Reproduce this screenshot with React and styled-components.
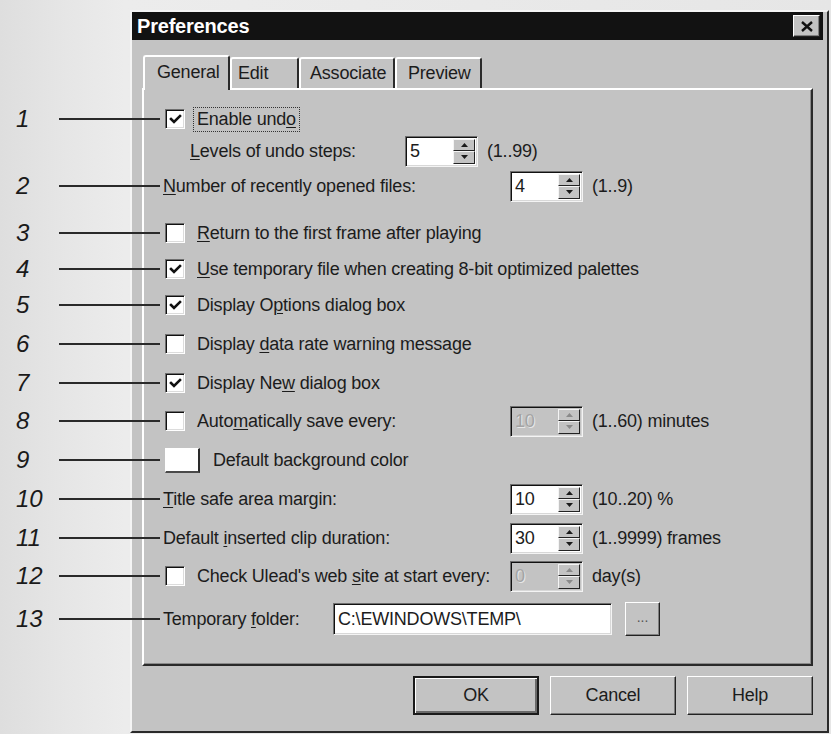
import React from 'react';
import styled, { createGlobalStyle } from 'styled-components';

const GlobalStyle = createGlobalStyle`
  html, body { margin: 0; padding: 0; }
  body {
    background: #e4e4e4;
    font-family: "Liberation Sans", Arial, sans-serif;
    color: #1c1c1c;
  }
`;

const Page = styled.div`
  width: 831px;
  height: 734px;
  box-sizing: border-box;
  padding: 10px 0 0 130px;
  background: linear-gradient(to right, #dedede 0%, #e6e6e6 8%, #ececec 15%, #e6e6e6 100%);
  overflow: hidden;
`;

const Window = styled.div`
  width: 699px;
  height: 723px;
  box-sizing: border-box;
  background: #c3c3c3;
  border-style: solid;
  border-width: 2px;
  border-color: #f4f4f4 #2a2a2a #2a2a2a #f4f4f4;
  display: flex;
  flex-direction: column;
`;

const TitleBar = styled.div`
  height: 28px;
  margin-right: 4px;
  background: #121212;
  display: flex;
  align-items: center;
  justify-content: space-between;
  padding: 0 3px 0 5px;
`;

const Title = styled.span`
  color: #fff;
  font-weight: bold;
  font-size: 20px;
  letter-spacing: -0.2px;
`;

const CloseButton = styled.button`
  width: 27px;
  height: 22px;
  padding: 0;
  background: #c3c3c3;
  border-style: solid;
  border-width: 1px;
  border-color: #fff #222 #222 #fff;
  box-shadow: inset -1px -1px #808080;
  display: flex;
  align-items: center;
  justify-content: center;
`;

const Body = styled.div`
  flex: 1;
  display: flex;
  flex-direction: column;
  padding: 15px 14px 0 10px;
`;

const TabRow = styled.div`
  display: flex;
  align-items: flex-end;
  height: 35px;
  margin: 0 0 -2px 1px;
  position: relative;
  z-index: 1;
`;

const Tab = styled.div`
  width: ${p => p.$w}px;
  height: ${p => (p.$active ? 35 : 31)}px;
  margin-bottom: ${p => (p.$active ? 0 : 2)}px;
  box-sizing: border-box;
  background: #c3c3c3;
  border-style: solid;
  border-width: 2px 2px 0 2px;
  border-color: #fff #2a2a2a #c3c3c3 #fff;
  border-radius: 3px 3px 0 0;
  padding: 0 0 ${p => (p.$active ? 2 : 0)}px ${p => p.$pad}px;
  display: flex;
  align-items: center;
  font-size: 18px;
  letter-spacing: -0.2px;
`;

const Panel = styled.div`
  height: 578px;
  box-sizing: border-box;
  border-style: solid;
  border-width: 2px;
  border-color: #fff #2a2a2a #2a2a2a #fff;
  box-shadow: inset -1px -1px #8a8a8a;
  padding: 13px 0 0 19px;
  display: flex;
  flex-direction: column;
`;

const Row = styled.div`
  position: relative;
  height: 32px;
  margin-top: ${p => p.$gap || 0}px;
  margin-left: ${p => p.$indent || 0}px;
  display: flex;
  align-items: center;
  font-size: 18px;
  letter-spacing: -0.2px;
  white-space: nowrap;
`;

const Lead = styled.div`
  width: ${p => p.$w}px;
  display: flex;
  align-items: center;
`;

const Callout = styled.div`
  position: absolute;
  left: -147px;
  width: 144px;
  top: 50%;
  transform: translateY(-50%);
  display: flex;
  align-items: center;
  pointer-events: none;
`;

const CalloutNum = styled.span`
  width: 43px;
  font-style: italic;
  font-size: 24px;
  line-height: 1;
  color: #1a1a1a;
  letter-spacing: 0;
`;

const CalloutLine = styled.span`
  flex: 1;
  height: 2px;
  background: #2a2a2a;
`;

const Box = styled.span`
  width: 20px;
  height: 20px;
  margin-left: 2px;
  box-sizing: border-box;
  background: #fff;
  border-style: solid;
  border-width: 1px;
  border-color: #6e6e6e #fff #fff #6e6e6e;
  box-shadow: inset 1px 1px #111, inset -1px -1px #dcdcdc;
  display: flex;
  align-items: center;
  justify-content: center;
  flex-shrink: 0;
`;

const BoxLabel = styled.span`
  margin-left: 8px;
  margin-right: -4px;
  padding: 1px 3px;
  border: 1px ${p => (p.$focus ? 'dotted #333' : 'solid transparent')};
`;

const Key = styled.span`
  text-decoration: underline;
  text-underline-offset: 2px;
  text-decoration-thickness: 1px;
`;

const Field = styled.div`
  width: ${p => p.$w || 73}px;
  height: ${p => p.$h || 31}px;
  box-sizing: border-box;
  background: ${p => (p.$disabled ? '#c3c3c3' : '#fff')};
  border-style: solid;
  border-width: 1px;
  border-color: #6e6e6e #f4f4f4 #f4f4f4 #6e6e6e;
  box-shadow: inset 1px 1px #111, inset -1px -1px #d8d8d8;
  display: flex;
  align-items: stretch;
  padding: 2px;
`;

const FieldText = styled.span`
  flex: 1;
  display: flex;
  align-items: center;
  padding-left: 2px;
  font-size: 18px;
  letter-spacing: -0.2px;
  color: ${p => (p.$disabled ? '#a4a4a4' : '#1c1c1c')};
  text-shadow: ${p => (p.$disabled ? '1px 1px #e8e8e8' : 'none')};
`;

const SpinStack = styled.div`
  width: 22px;
  display: flex;
  flex-direction: column;
`;

const SpinHalf = styled.span`
  flex: 1;
  background: #c3c3c3;
  border-style: solid;
  border-width: 1px;
  border-color: #f4f4f4 #222 #222 #f4f4f4;
  display: flex;
  align-items: center;
  justify-content: center;
`;

const Range = styled.span`
  margin-left: 9px;
`;

const Swatch = styled.span`
  width: 35px;
  height: 25px;
  margin-left: 2px;
  box-sizing: border-box;
  background: #fff;
  border-style: solid;
  border-width: 1px 2px 2px 1px;
  border-color: #fff #2a2a2a #4a4a4a #fff;
`;

const SwatchLabel = styled.span`
  margin-left: 13px;
`;

const Browse = styled.button`
  width: 35px;
  height: 34px;
  margin-left: 13px;
  padding: 0 0 4px;
  background: #c3c3c3;
  border-style: solid;
  border-width: 1px;
  border-color: #fff #222 #222 #fff;
  box-shadow: inset -1px -1px #808080;
  font-family: inherit;
  font-size: 14px;
  color: #555;
`;

const Footer = styled.div`
  display: flex;
  justify-content: flex-end;
  gap: 11px;
  margin-top: 10px;
`;

const Button = styled.button`
  width: 126px;
  height: 39px;
  box-sizing: border-box;
  background: #c3c3c3;
  font-family: inherit;
  font-size: 18px;
  color: #1c1c1c;
  border-style: solid;
  border-width: ${p => (p.$default ? 2 : 1)}px;
  border-color: ${p => (p.$default ? '#1a1a1a' : '#fff #222 #222 #fff')};
  box-shadow: ${p =>
    p.$default
      ? 'inset 1px 1px #fff, inset -2px -2px #6a6a6a'
      : 'inset -1px -1px #7a7a7a'};
  letter-spacing: -0.2px;
`;

const CheckMark = () => (
  <svg width="13" height="13" viewBox="0 0 13 13">
    <path d="M2 6 L5 9 L11 3" fill="none" stroke="#111" strokeWidth="2.6" strokeLinecap="square" />
  </svg>
);

const Arrow = ({ up, dim }) => (
  <svg width="7" height="4" viewBox="0 0 7 4">
    <polygon points={up ? '3.5,0 7,4 0,4' : '0,0 7,0 3.5,4'} fill={dim ? '#8a8a8a' : '#1a1a1a'} />
  </svg>
);

const Check = ({ on }) => <Box>{on && <CheckMark />}</Box>;

const Spinner = ({ value, disabled }) => (
  <Field $disabled={disabled}>
    <FieldText $disabled={disabled}>{value}</FieldText>
    <SpinStack>
      <SpinHalf><Arrow up dim={disabled} /></SpinHalf>
      <SpinHalf><Arrow dim={disabled} /></SpinHalf>
    </SpinStack>
  </Field>
);

const Mark = ({ n }) => (
  <Callout>
    <CalloutNum>{n}</CalloutNum>
    <CalloutLine />
  </Callout>
);

const tabs = [
  { label: 'General', w: 87, pad: 12, active: true },
  { label: 'Edit', w: 69, pad: 6 },
  { label: 'Associate', w: 96, pad: 9 },
  { label: 'Preview', w: 87, pad: 11 },
];

export default function App() {
  return (
    <>
      <GlobalStyle />
      <Page>
        <Window>
          <TitleBar>
            <Title>Preferences</Title>
            <CloseButton aria-label="Close">
              <svg width="12" height="11" viewBox="0 0 12 11">
                <path d="M1 1 L11 10 M11 1 L1 10" stroke="#111" strokeWidth="2.4" />
              </svg>
            </CloseButton>
          </TitleBar>
          <Body>
            <TabRow>
              {tabs.map(t => (
                <Tab key={t.label} $w={t.w} $pad={t.pad} $active={t.active}>{t.label}</Tab>
              ))}
            </TabRow>
            <Panel>
              <Row>
                <Mark n="1" />
                <Check on />
                <BoxLabel $focus>Enable und<Key>o</Key></BoxLabel>
              </Row>
              <Row $indent={27}>
                <Lead $w={215}><span><Key>L</Key>evels of undo steps:</span></Lead>
                <Spinner value="5" />
                <Range>(1..99)</Range>
              </Row>
              <Row $gap={3}>
                <Mark n="2" />
                <Lead $w={347}><span><Key>N</Key>umber of recently opened files:</span></Lead>
                <Spinner value="4" />
                <Range>(1..9)</Range>
              </Row>
              <Row $gap={15}>
                <Mark n="3" />
                <Check />
                <BoxLabel><Key>R</Key>eturn to the first frame after playing</BoxLabel>
              </Row>
              <Row $gap={4}>
                <Mark n="4" />
                <Check on />
                <BoxLabel><Key>U</Key>se temporary file when creating 8-bit optimized palettes</BoxLabel>
              </Row>
              <Row $gap={4}>
                <Mark n="5" />
                <Check on />
                <BoxLabel>Display O<Key>p</Key>tions dialog box</BoxLabel>
              </Row>
              <Row $gap={7}>
                <Mark n="6" />
                <Check />
                <BoxLabel>Display <Key>d</Key>ata rate warning message</BoxLabel>
              </Row>
              <Row $gap={7}>
                <Mark n="7" />
                <Check on />
                <BoxLabel>Display Ne<Key>w</Key> dialog box</BoxLabel>
              </Row>
              <Row $gap={6}>
                <Mark n="8" />
                <Lead $w={347}>
                  <Check />
                  <BoxLabel>Auto<Key>m</Key>atically save every:</BoxLabel>
                </Lead>
                <Spinner value="10" disabled />
                <Range>(1..60) minutes</Range>
              </Row>
              <Row $gap={7}>
                <Mark n="9" />
                <Swatch />
                <SwatchLabel>Default background color</SwatchLabel>
              </Row>
              <Row $gap={7}>
                <Mark n="10" />
                <Lead $w={347}><span><Key>T</Key>itle safe area margin:</span></Lead>
                <Spinner value="10" />
                <Range>(10..20) %</Range>
              </Row>
              <Row $gap={7}>
                <Mark n="11" />
                <Lead $w={347}><span>Default <Key>i</Key>nserted clip duration:</span></Lead>
                <Spinner value="30" />
                <Range>(1..9999) frames</Range>
              </Row>
              <Row $gap={6}>
                <Mark n="12" />
                <Lead $w={347}>
                  <Check />
                  <BoxLabel>Check Ulead's web <Key>s</Key>ite at start every:</BoxLabel>
                </Lead>
                <Spinner value="0" disabled />
                <Range>day(s)</Range>
              </Row>
              <Row $gap={11}>
                <Mark n="13" />
                <Lead $w={170}><span>Temporary <Key>f</Key>older:</span></Lead>
                <Field $w={279} $h={32}>
                  <FieldText>C:\EWINDOWS\TEMP\</FieldText>
                </Field>
                <Browse>...</Browse>
              </Row>
            </Panel>
            <Footer>
              <Button $default>OK</Button>
              <Button>Cancel</Button>
              <Button>Help</Button>
            </Footer>
          </Body>
        </Window>
      </Page>
    </>
  );
}
